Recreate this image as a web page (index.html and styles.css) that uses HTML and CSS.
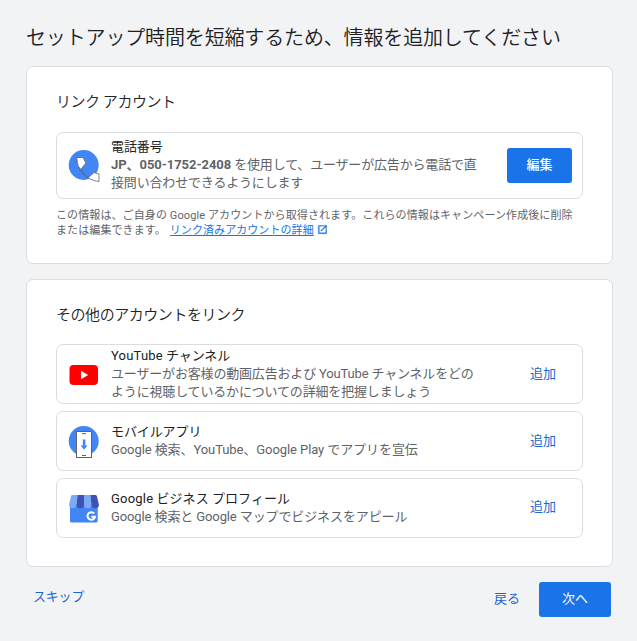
FILE: index.html
```html
<!DOCTYPE html>
<html lang="ja">
<head>
<meta charset="utf-8">
<title>アカウントのリンク</title>
<link rel="stylesheet" href="styles.css">
</head>
<body>
<main class="page">
  <h1 class="title">セットアップ時間を短縮するため、情報を追加してください</h1>

  <section class="card card-linked">
    <h2 class="heading heading-spaced">リンク アカウント</h2>
    <div class="row row-tall">
      <svg class="icon" viewBox="0 0 32 34">
        <circle cx="15.7" cy="16" r="15" fill="#4285f4"/>
        <path d="M8.8 8.5H15L18 14 13 20 9.8 16.5ZM20 29L26 23.5 31 25V32.5L23 31Z" fill="#fff"/>
        <path d="M8.8 8.5H15L18 14 13 20Q15.5 25 20 29L26 23.5 31 25V32.5C18 31 9 22 8.8 8.5Z" fill="none" stroke="#5f6368" stroke-width=".8"/>
      </svg>
      <div class="text">
        <div class="name">電話番号</div>
        <div class="desc"><b>JP、050-1752-2408</b> を使用して、ユーザーが広告から電話で直<br>接問い合わせできるようにします</div>
      </div>
      <button class="primary edit">編集</button>
    </div>
    <p class="note">この情報は、ご自身の Google アカウントから取得されます。これらの情報はキャンペーン作成後に削除<br>または編集できます。 <a class="link" href="#">リンク済みアカウントの詳細</a><svg class="external" viewBox="0 0 24 24"><path d="M19 19H5V5h7V3H3v18h18v-9h-2zM14 3v2h3.6L8 14.6 9.4 16 19 6.4V10h2V3z" fill="#1a73e8" stroke="#1a73e8" stroke-width=".8"/></svg></p>
  </section>

  <section class="card card-other">
    <h2 class="heading">その他のアカウントをリンク</h2>
    <div class="rows">
      <div class="row">
        <svg class="icon" viewBox="0 0 32 34">
          <rect x="1.5" y="8" width="28.5" height="20" rx="4" fill="#f00"/>
          <path d="M13 13.7V22.3L20.2 18Z" fill="#fff"/>
        </svg>
        <div class="text">
          <div class="name"><span class="latin">YouTube</span> チャンネル</div>
          <div class="desc">ユーザーがお客様の動画広告および YouTube チャンネルをどの<br>ように視聴しているかについての詳細を把握しましょう</div>
        </div>
        <button class="textual">追加</button>
      </div>
      <div class="row">
        <svg class="icon icon-low" viewBox="0 0 32 34">
          <circle cx="15.7" cy="16" r="15" fill="#4285f4"/>
          <rect x="8.5" y="6.5" width="15" height="26" fill="#fff" stroke="#5f6368"/>
          <path d="M14 8.7H18M14 30.5H18" stroke="#5f6368"/>
          <path d="M14.8 14.5H17.4V20.5H19.6L16.1 24.8 12.6 20.5H14.8Z" fill="#4285f4"/>
        </svg>
        <div class="text">
          <div class="name">モバイルアプリ</div>
          <div class="desc desc-mixed">Google 検索、YouTube、Google Play でアプリを宣伝</div>
        </div>
        <button class="textual">追加</button>
      </div>
      <div class="row">
        <svg class="icon" viewBox="0 0 32 34">
          <path d="M2 13H29.7V30Q29.7 31.5 28.2 31.5H3.5Q2 31.5 2 30Z" fill="#4285f4"/>
          <path d="M3 5.2Q3.3 4 4.5 4H9.5L8.5 14A3.8 3.8 0 0 1 1 14Z" fill="#7baaf7"/>
          <path d="M9.5 4H16V14A3.8 3.8 0 0 1 8.5 14Z" fill="#3f51b5"/>
          <path d="M16 4H22.3L23.5 14A3.8 3.8 0 0 1 16 14Z" fill="#7baaf7"/>
          <path d="M22.3 4H27.5Q28.5 4 28.9 5.2L31 14A3.8 3.8 0 0 1 23.5 14Z" fill="#3f51b5"/>
          <path d="M26.2 22.5A3.8 3.8 0 1 0 27 25.7H23.3" fill="none" stroke="#fff" stroke-width="2"/>
        </svg>
        <div class="text">
          <div class="name name-wide"><span class="latin">Google</span> ビジネス プロフィール</div>
          <div class="desc desc-wide">Google 検索と Google マップでビジネスをアピール</div>
        </div>
        <button class="textual">追加</button>
      </div>
    </div>
  </section>

  <footer class="footer">
    <button class="textual skip">スキップ</button>
    <button class="textual back">戻る</button>
    <button class="primary next">次へ</button>
  </footer>
</main>
</body>
</html>
```
FILE: styles.css
```css
* { box-sizing: border-box; }
body {
  margin: 0;
  background: #f1f3f4;
  color: #202124;
  font-family: Roboto, "Noto Sans CJK JP", sans-serif;
}
.page { width: 637px; height: 641px; padding: 22px 24px 0 26px; }
.title {
  margin: 0;
  height: 44px;
  font-size: 20px;
  line-height: 32px;
  font-weight: 350;
  letter-spacing: -.15px;
  white-space: nowrap;
}
.card {
  width: 587px;
  padding: 0 29px;
  background: #fff;
  border: 1px solid #dadce0;
  border-radius: 7px;
}
.card-linked { height: 198px; margin-bottom: 15px; }
.card-other { height: 288px; }
.heading {
  margin: 0;
  height: 64px;
  padding-top: 25px;
  font-size: 15px;
  line-height: 20px;
  font-weight: 350;
  letter-spacing: -.45px;
}
.heading-spaced { height: 65px; }
.rows { display: flex; flex-direction: column; gap: 7px; }
.row {
  display: flex;
  align-items: center;
  height: 60px;
  padding: 0 10px 0 11px;
  border: 1px solid #dadce0;
  border-radius: 7px;
}
.row-tall { height: 67px; }
.row-tall .text { padding-bottom: 2px; }
.icon { width: 32px; height: 34px; flex: none; }
.icon-low { margin-top: 2px; }
.text { flex: 1; margin-left: 11px; white-space: nowrap; }
.name { font-size: 13px; line-height: 18px; font-weight: 400; color: #202124; letter-spacing: -.1px; }
.name-wide { letter-spacing: .05px; }
.latin { font-weight: 450; letter-spacing: .2px; }
.desc { font-size: 13px; line-height: 18px; font-weight: 400; color: #5f6368; letter-spacing: -.17px; }
.desc-mixed { letter-spacing: -.08px; }
.desc-wide { letter-spacing: -.11px; }
.desc b { font-weight: 700; letter-spacing: -.05px; }
button { border: 0; padding: 0; background: none; font: 400 13px/18px Roboto, "Noto Sans CJK JP", sans-serif; }
.primary { height: 35px; padding-bottom: 2px; border-radius: 3px; background: #1a73e8; color: #fff; }
.edit { width: 65px; font-weight: 500; }
.textual { color: #1967d2; }
.row .textual { width: 60px; margin-right: -1px; padding-bottom: 1px; }
.row:last-child .textual { padding-bottom: 2px; }
.note {
  margin: 9px 0 0;
  font-size: 11px;
  line-height: 15px;
  font-weight: 400;
  letter-spacing: .1px;
  color: #5f6368;
  white-space: nowrap;
}
.link { margin-left: 1px; letter-spacing: .08px; color: #1a73e8; text-decoration: underline; }
.external { width: 11px; height: 11px; margin-left: 3px; vertical-align: -1px; }
.footer { display: flex; align-items: center; height: 35px; margin-top: 15px; }
.skip { margin: 0 auto 5px 7px; letter-spacing: -.2px; }
.back { margin-bottom: 2px; }
.next { width: 72px; margin: 0 2px 0 19px; }
```
